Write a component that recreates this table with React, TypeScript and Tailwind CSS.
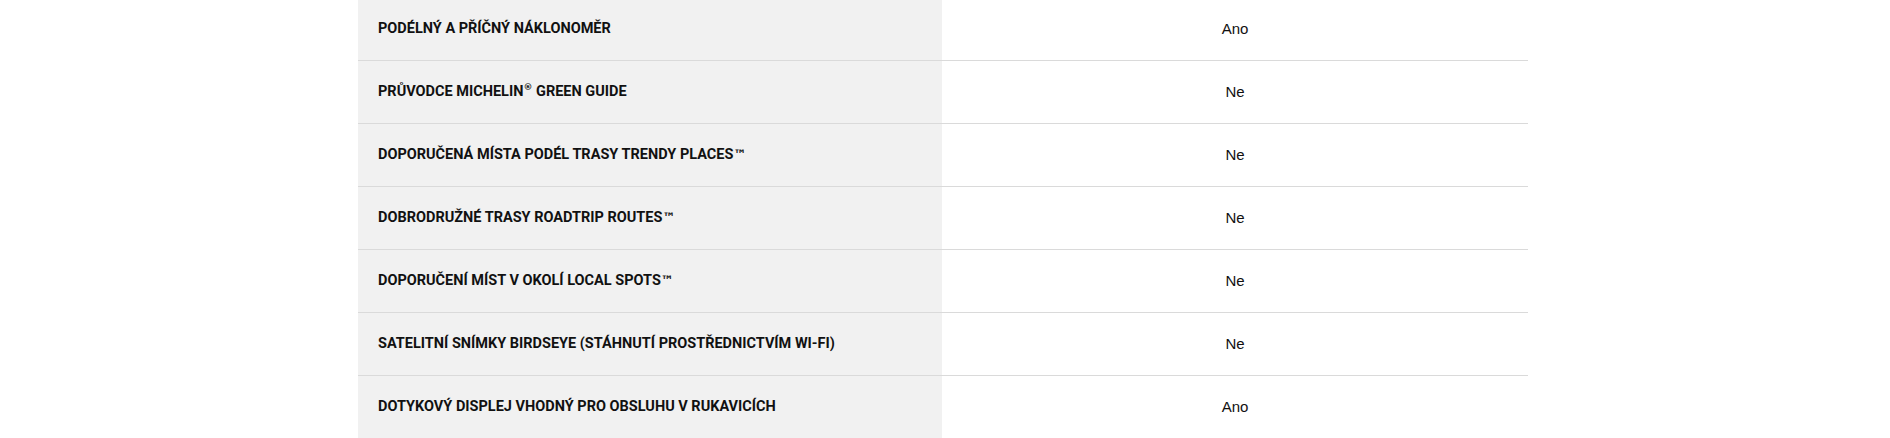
const ROWS: { label: string; value: string }[] = [
  { label: "Podélný a příčný náklonoměr", value: "Ano" },
  { label: "Průvodce Michelin® Green Guide", value: "Ne" },
  { label: "Doporučená místa podél trasy Trendy Places™", value: "Ne" },
  { label: "Dobrodružné trasy Roadtrip Routes™", value: "Ne" },
  { label: "Doporučení míst v okolí Local Spots™", value: "Ne" },
  { label: "Satelitní snímky BirdsEye (stáhnutí prostřednictvím Wi-Fi)", value: "Ne" },
  { label: "Dotykový displej vhodný pro obsluhu v rukavicích", value: "Ano" },
];

// trademark marks sit higher and heavier than Roboto draws them
function Label({ text }: { text: string }) {
  const parts = text.split(/([®™])/);
  return (
    <>
      {parts.map((p, i) =>
        p === "®" ? (
          <span key={i} className="align-super text-[9px] leading-none font-['DejaVu_Sans',sans-serif]">
            ®
          </span>
        ) : p === "™" ? (
          <span key={i} className="font-['DejaVu_Sans',sans-serif] text-[13px]">
            ™
          </span>
        ) : (
          <span key={i}>{p}</span>
        ),
      )}
    </>
  );
}

export default function App() {
  return (
    <div className="h-[438px] w-full overflow-hidden bg-white">
      <div className="ml-[358px] mt-[-2px] w-[1170px]">
        {ROWS.map((row, i) => (
          <div
            key={row.label}
            className={`grid grid-cols-[584px_1fr] ${
              i < ROWS.length - 1 ? "border-b border-[#dadada]" : ""
            }`}
          >
            <div className="flex h-[62px] items-center bg-[#f1f1f1] pl-5 font-['Roboto',sans-serif] text-[14.5px] font-bold uppercase text-[#111]">
              <span>
                <Label text={row.label} />
              </span>
            </div>
            <div className="flex h-[62px] items-center justify-center font-['Liberation_Sans',Arial,sans-serif] text-[15px] text-[#111]">
              {row.value}
            </div>
          </div>
        ))}
      </div>
    </div>
  );
}
